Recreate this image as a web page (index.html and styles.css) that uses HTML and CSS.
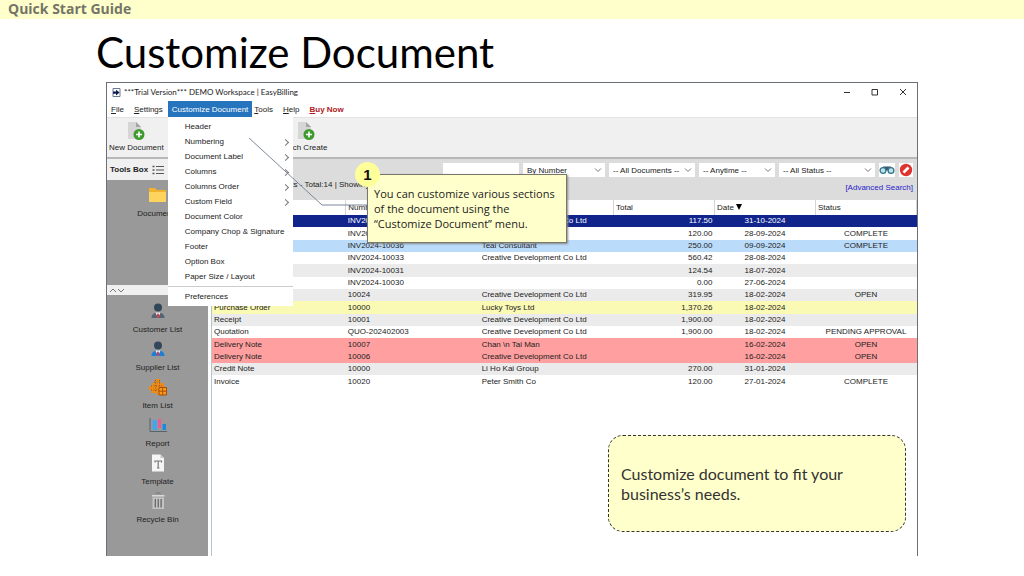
FILE: index.html
```html
<!DOCTYPE html>
<html lang="en">
<head>
<meta charset="utf-8">
<title>Customize Document</title>
<link rel="stylesheet" href="styles.css">
</head>
<body>
<header class="guide-bar">Quick Start Guide</header>
<h1 class="page-title">Customize Document</h1>
<main class="window">
  <div class="title-bar">
    <svg class="app-icon" viewBox="0 0 9 9"><path d="M1 .5h7v8H1z" fill="#fff" stroke="#6b7a90"/><path d="M1 3.500h3V1.800L7.600 4.600 4 7.400V5.700H1z" fill="#101c50"/></svg>
    <span class="title-text">***Trial Version*** DEMO Workspace | EasyBilling</span>
    <div class="window-controls">
      <button aria-label="Minimize"><svg viewBox="0 0 8 8"><path d="M1 4.500h6"/></svg></button>
      <button aria-label="Maximize"><svg viewBox="0 0 8 8"><path d="M1 1.500h5.500V7H1z"/></svg></button>
      <button aria-label="Close"><svg viewBox="0 0 8 8"><path d="M1 1l6 6M7 1L1 7"/></svg></button>
    </div>
  </div>
  <nav class="menu-bar">
    <button><u>F</u>ile</button>
    <button><u>S</u>ettings</button>
    <div class="menu-open">
      <button class="active">Customize Document</button>
      <div class="dropdown">
        <button>Header</button>
        <button class="sub">Numbering</button>
        <button class="sub">Document Label</button>
        <button class="sub">Columns</button>
        <button class="sub">Columns Order</button>
        <button class="sub">Custom Field</button>
        <button>Document Color</button>
        <button>Company Chop &amp; Signature</button>
        <button>Footer</button>
        <button>Option Box</button>
        <button>Paper Size / Layout</button>
        <hr>
        <button>Preferences</button>
      </div>
    </div>
    <button><u>T</u>ools</button>
    <button><u>H</u>elp</button>
    <button class="buy"><u>B</u>uy Now</button>
  </nav>
  <div class="toolbar">
    <button class="tool">
      <svg viewBox="0 0 20 20"><path d="M2 1h8l5 5v12H2z" fill="#d6d6d6"/><path d="M10 1l5 5h-5z" fill="#a5a5a5"/><circle cx="13" cy="13.500" r="5.500" fill="#3f9a2e"/><path d="M13 10.500v6M10 13.500h6" stroke="#fff" stroke-width="1.600"/></svg>
      New Document</button>
    <button class="tool tool-batch">
      <svg viewBox="0 0 20 20"><path d="M2 1h8l5 5v12H2z" fill="#d6d6d6"/><path d="M10 1l5 5h-5z" fill="#a5a5a5"/><circle cx="13" cy="13.500" r="5.500" fill="#3f9a2e"/><path d="M13 10.500v6M10 13.500h6" stroke="#fff" stroke-width="1.600"/></svg>
      Batch Create</button>
  </div>
  <div class="workspace">
    <aside class="sidebar">
      <div class="side-head"><strong>Tools Box</strong>
        <svg viewBox="0 0 12 10"><path d="M4 1.500h8M4 5h8M4 8.500h8" stroke="#555"/><path d="M.5 1.500h2M.5 5h2M.5 8.500h2" stroke="#555" stroke-width="1.500"/></svg>
      </div>
      <div class="side-docs">
        <button class="side-item"><svg viewBox="0 0 20 20"><path d="M1 3h6l2 2h9v12H1z" fill="#f2b32c"/><path d="M1 7h17v10H1z" fill="#ffd45e"/></svg>Documents</button>
      </div>
      <div class="splitter"><svg viewBox="0 0 16 6"><path d="M1 5l3-3 3 3M9 2l3 3 3-3"/></svg></div>
      <div class="side-lists">
        <button class="side-item"><svg viewBox="0 0 20 20"><circle cx="10" cy="6.500" r="4" fill="#34475a"/><path d="M3.500 17c0-4 3-5.500 6.500-5.500s6.500 1.500 6.500 5.500z" fill="#566573"/><path d="M7.500 11.500h5L10 17z" fill="#fff"/><path d="M9.300 12.500h1.400l.8 3.500-1.500 1-1.500-1z" fill="#d23c4b"/></svg>Customer List</button>
        <button class="side-item"><svg viewBox="0 0 20 20"><circle cx="10" cy="6.500" r="4" fill="#34475a"/><path d="M3.500 17c0-4 3-5.500 6.500-5.500s6.500 1.500 6.500 5.500z" fill="#1c7fd6"/><path d="M7.500 11.500h5L10 17z" fill="#fff"/><path d="M9.300 12.500h1.400l.8 3.500-1.500 1-1.500-1z" fill="#d23c4b"/></svg>Supplier List</button>
        <button class="side-item"><svg viewBox="0 0 20 20"><path d="M7 2h5v4h4v4h3v8H9v-2H3v-3H1V9h3V6h3z" fill="#ec8b17"/><path d="M6 5h7M3 9h12M3 13h8M7.500 3v12M11.500 3v7" stroke="#8f5b22" stroke-dasharray="1 1.500"/><path d="M11 10.500h7.500V18H11zM14.700 10.500V18M11 14.200h7.500" fill="#f79a1d" stroke="#a84d00"/></svg>Item List</button>
        <button class="side-item"><svg viewBox="0 0 20 20"><path d="M2 3v13.500h17" fill="none" stroke="#56646e"/><path d="M4.500 5H9v10H4.500z" fill="#46a4ee"/><path d="M10 4h3v9h-3z" fill="#ee5b91"/><path d="M14.500 9H18v6h-3.500z" fill="#168be0"/></svg>Report</button>
        <button class="side-item"><svg viewBox="0 0 20 20"><path d="M4 1.500h8.500L16 5v13.500H4z" fill="#f5f5f5"/><path d="M12.500 1.500V5H16z" fill="#c4c4c4"/><path d="M7 9.500V8h6.500v1.500M10.200 8v7M9 15h2.500" fill="none" stroke="#777" stroke-width="1.200"/></svg>Template</button>
        <button class="side-item"><svg viewBox="0 0 20 20"><path d="M4.500 6.500h11.500V18H4.500z" fill="#c4c4c4"/><path d="M7.500 2h5" stroke="#777"/><path d="M4 4.800h12.500" stroke="#ddd" stroke-width="1.500"/><path d="M7.300 8v8.500M10.200 8v8.500M13.100 8v8.500" stroke="#5f5f5f" stroke-width="1.200"/></svg>Recycle Bin</button>
      </div>
    </aside>
    <section class="content">
      <div class="filters">
        <div class="filter-row">
          <input type="text" aria-label="Search text">
          <select class="by" aria-label="Search by"><option>By Number</option></select>
          <select class="docs" aria-label="Document type"><option>-- All Documents --</option></select>
          <select class="time" aria-label="Period"><option>-- Anytime --</option></select>
          <select class="status" aria-label="Status"><option>-- All Status --</option></select>
          <button class="icon-button" aria-label="Search"><svg viewBox="0 0 16 14"><path d="M4 4.500h3v2h2v-2h3" fill="none" stroke="#3d5966" stroke-width="2"/><circle cx="4" cy="7.500" r="2.900" fill="#b8e4ee" stroke="#38748b" stroke-width="1.300"/><circle cx="12" cy="7.500" r="2.900" fill="#b8e4ee" stroke="#38748b" stroke-width="1.300"/></svg></button>
          <button class="icon-button" aria-label="Clear"><svg viewBox="0 0 14 14"><circle cx="7" cy="7" r="6.200" fill="#df352e"/><path d="M4.500 9.500l5-5" stroke="#fff" stroke-width="2.600"/></svg></button>
        </div>
        <div class="summary"><span>Documents - Total:14 | Showing</span><a href="#">[Advanced Search]</a></div>
      </div>
      <table class="documents">
        <colgroup><col><col><col><col class="narrow"><col class="narrow"><col class="narrow"></colgroup>
        <thead><tr><th aria-label="Type"></th><th>Number</th><th aria-label="Customer"></th><th>Total</th><th>Date <svg class="sort" viewBox="0 0 6 6"><path d="M0 0h6L3 6z"/></svg></th><th>Status</th></tr></thead>
        <tbody>
          <tr class="selected"><td></td><td>INV2024-10038</td><td>Creative Development Co Ltd</td><td>117.50</td><td>31-10-2024</td><td></td></tr>
          <tr><td></td><td>INV2024-10037</td><td></td><td>120.00</td><td>28-09-2024</td><td>COMPLETE</td></tr>
          <tr class="blue"><td></td><td>INV2024-10036</td><td>Teal Consultant</td><td>250.00</td><td>09-09-2024</td><td>COMPLETE</td></tr>
          <tr><td></td><td>INV2024-10033</td><td>Creative Development Co Ltd</td><td>560.42</td><td>28-08-2024</td><td></td></tr>
          <tr class="alt"><td></td><td>INV2024-10031</td><td></td><td>124.54</td><td>18-07-2024</td><td></td></tr>
          <tr><td></td><td>INV2024-10030</td><td></td><td>0.00</td><td>27-06-2024</td><td></td></tr>
          <tr class="alt"><td></td><td>10024</td><td>Creative Development Co Ltd</td><td>319.95</td><td>18-02-2024</td><td>OPEN</td></tr>
          <tr class="yellow"><td>Purchase Order</td><td>10000</td><td>Lucky Toys Ltd</td><td>1,370.26</td><td>18-02-2024</td><td></td></tr>
          <tr class="alt"><td>Receipt</td><td>10001</td><td>Creative Development Co Ltd</td><td>1,900.00</td><td>18-02-2024</td><td></td></tr>
          <tr><td>Quotation</td><td>QUO-202402003</td><td>Creative Development Co Ltd</td><td>1,900.00</td><td>18-02-2024</td><td>PENDING APPROVAL</td></tr>
          <tr class="red"><td>Delivery Note</td><td>10007</td><td>Chan \n Tai Man</td><td></td><td>16-02-2024</td><td>OPEN</td></tr>
          <tr class="red"><td>Delivery Note</td><td>10006</td><td>Creative Development Co Ltd</td><td></td><td>16-02-2024</td><td>OPEN</td></tr>
          <tr class="alt"><td>Credit Note</td><td>10000</td><td>Li Ho Kai Group</td><td>270.00</td><td>31-01-2024</td><td></td></tr>
          <tr><td>Invoice</td><td>10020</td><td>Peter Smith Co</td><td>120.00</td><td>27-01-2024</td><td>COMPLETE</td></tr>
        </tbody>
      </table>
    </section>
  </div>
  <svg class="leader" viewBox="0 0 120 70"><path d="M1 1l73 67h45"/></svg>
  <div class="callout"><span class="badge">1</span>You can customize various sections<br>of the document using the<br>“Customize Document” menu.</div>
  <div class="note">Customize document to fit your<br>business’s needs.</div>
</main>
</body>
</html>
```
FILE: styles.css
```css
* { box-sizing: border-box; }
body { margin: 0; background: #fff; color: #222; font-family: "Liberation Sans", Arial, sans-serif; font-size: 8px; }
button { margin: 0; padding: 0; border: 0; background: none; color: inherit; font: inherit; white-space: nowrap; }
svg { display: block; }

.guide-bar { height: 19px; padding-left: 8px; background: #ffffcc; color: #747467; font: bold 14px/18px "Open Sans", sans-serif; }
.page-title { margin: 0; padding-left: 96px; height: 63px; color: #000; font: 400 42px/66px Lato, sans-serif; white-space: nowrap; }

.window { position: relative; display: flex; flex-direction: column; min-height: 474px; margin: 0 106px; border: 1px solid #6b7078; border-bottom: 0; }
.title-bar { display: flex; align-items: center; height: 18px; padding: 0 10px 0 5px; }
.app-icon { width: 9px; height: 9px; margin-right: 3px; }
.title-text { font: 8px/12px Lato, sans-serif; }
.window-controls { display: flex; gap: 20px; margin-left: auto; }
.window-controls svg { width: 8px; height: 8px; fill: none; stroke: #333; }

.menu-bar { display: flex; align-items: stretch; height: 16px; padding-left: 4px; gap: 10px; }
.menu-bar u { text-underline-offset: 1px; }
.menu-open { position: relative; display: flex; margin: 0 -8px 0 -5px; }
.menu-open .active { padding: 0 4px; background: #2574bd; color: #fff; }
.buy { color: #b01822; font-weight: bold; }
.dropdown { position: absolute; z-index: 2; top: 100%; left: 0; width: 125px; padding: 2px 0; background: #fff; display: flex; flex-direction: column; }
.dropdown button { position: relative; height: 15px; padding-left: 17px; text-align: left; }
.dropdown .sub::after { content: ""; position: absolute; right: 5px; top: 6px; width: 4px; height: 4px; border: solid #777; border-width: 1px 1px 0 0; transform: rotate(45deg); }
.dropdown hr { width: 100%; margin: 2px 0; border: 0; border-top: 1px solid #ccc; }

.toolbar { display: flex; height: 42px; padding: 3px 0 0 2px; border-top: 1px solid #e2e2e2; border-bottom: 2px solid #b8b8b8; background: #f0f0f0; }
.tool { display: flex; flex-direction: column; align-items: center; line-height: 14px; }
.tool svg { width: 20px; height: 20px; margin: 0; }
.tool-batch { margin-left: 117px; }
.tool-batch svg { margin-left: 4px; }

.workspace { display: flex; flex: 1; }
.sidebar { display: flex; flex-direction: column; width: 101px; background: #999; }
.side-head { display: flex; align-items: center; gap: 4px; height: 21px; padding-left: 3px; background: #f0f0f0; }
.side-head svg { width: 12px; height: 10px; }
.side-docs { height: 105px; padding-top: 5px; }
.side-item { display: flex; flex-direction: column; align-items: center; gap: 2px; width: 100%; height: 38px; line-height: 14px; }
.side-item svg { width: 20px; height: 20px; }
.splitter { height: 10px; padding: 2px; background: #f0f0f0; }
.splitter svg { width: 16px; height: 6px; fill: none; stroke: #777; }
.side-lists { flex: 1; padding-top: 6px; }

.content { flex: 1; min-width: 0; margin-left: 3px; border-left: 1px solid #b5c5cc; }
.filters { height: 41px; padding: 4px 4px 0 3px; background: #dcdcdc; }
.filter-row { display: flex; justify-content: flex-end; gap: 4px; height: 14px; }
.filter-row input, .filter-row select { height: 14px; margin: 0; padding: 0 4px; border: 0; border-radius: 0; background: #fff; color: #222; font: inherit; }
.filter-row input { width: 76px; }
.filter-row select { appearance: none; background: #fff url("data:image/svg+xml,%3Csvg xmlns='http://www.w3.org/2000/svg' viewBox='0 0 8 6'%3E%3Cpath d='M1 1.500l3 3 3-3' fill='none' stroke='%23777'/%3E%3C/svg%3E") no-repeat right 3px center / 8px 6px; }
.filter-row .by { width: 82px; }
.filter-row .docs { width: 86px; }
.filter-row .time { width: 76px; }
.filter-row .status { width: 96px; }
.icon-button svg { width: 16px; height: 14px; background: #fff; }
.icon-button:last-child svg { width: 14px; }
.summary { display: flex; justify-content: space-between; padding-top: 2px; line-height: 12px; }
.summary span { padding-left: 42px; }
.summary a { padding-top: 3px; color: #2a22cc; text-decoration: none; }

.documents { width: 100%; height: 188px; border-collapse: collapse; table-layout: fixed; line-height: 10px; }
.narrow { width: 101px; }
.documents th, .documents td { padding: 0 2px; white-space: nowrap; }
.documents th { height: 15px; border-right: 1px solid #d4d4d4; font-weight: 400; text-align: left; }
.documents td:nth-child(4) { text-align: right; }
.documents td:nth-child(n+5) { text-align: center; }
.sort { display: inline-block; width: 6px; height: 6px; }
.alt { background: #ebebeb; }
.selected { background: #10248c; color: #fff; }
.blue { background: #badbfa; }
.yellow { background: #fafab4; }
.red { background: #ff9f9f; }

.leader { position: absolute; z-index: 3; top: 54px; left: 141px; width: 120px; height: 70px; fill: none; stroke: #7d8896; }
.callout { position: absolute; z-index: 4; top: 91px; left: 260px; width: 200px; padding: 11px 6px; border: 1px solid #77786a; background: #ffffcc; box-shadow: 1px 1px 2px #888; color: #222; font: 11px/15px "Open Sans", sans-serif; white-space: nowrap; }
.badge { position: absolute; top: -13px; left: -13px; width: 25px; height: 25px; border-radius: 50%; background: #ffff99; color: #111; font: bold 15px/25px "Liberation Sans", sans-serif; text-align: center; }
.note { position: absolute; right: 11px; bottom: 24px; display: flex; align-items: center; width: 298px; height: 97px; padding-left: 12px; border: 1px dashed #333; border-radius: 15px; background: #ffffcc; color: #333; font: 16px/20px Lato, sans-serif; }
```
